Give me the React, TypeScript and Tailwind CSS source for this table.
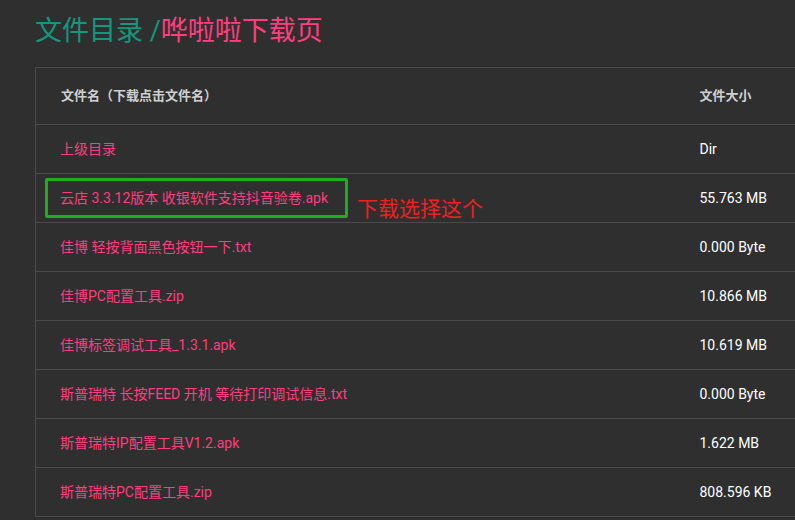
import React from 'react';

// 文件列表
const files = [
  { name: '上级目录', size: 'Dir' },
  { name: '云店 3.3.12版本 收银软件支持抖音验卷.apk', size: '55.763 MB' },
  { name: '佳博 轻按背面黑色按钮一下.txt', size: '0.000 Byte' },
  { name: '佳博PC配置工具.zip', size: '10.866 MB' },
  { name: '佳博标签调试工具_1.3.1.apk', size: '10.619 MB' },
  { name: '斯普瑞特 长按FEED 开机 等待打印调试信息.txt', size: '0.000 Byte' },
  { name: '斯普瑞特IP配置工具V1.2.apk', size: '1.622 MB' },
  { name: '斯普瑞特PC配置工具.zip', size: '808.596 KB' },
];

const font = "font-['Roboto','Noto_Sans_CJK_SC',sans-serif]";

export default function App() {
  return (
    <div className={`relative w-[795px] h-[520px] overflow-hidden bg-[#2f2f2f] ${font}`}>
      <h1 className="pl-[35px] pt-[12px] h-[67px] text-[27px] leading-[38px]">
        <span className="text-[#14967f]">文件目录 /</span>
        <span className="text-[#ff3d7f]">哗啦啦下载页</span>
      </h1>

      <div className="ml-[35px] w-[800px]">
        <table className="w-full border-collapse border border-[#4a4a4a] text-[14px]">
          <thead>
            <tr className="h-[57px] border-b border-[#4a4a4a] text-[13px]">
              <th className="w-[639px] pl-[25px] text-left font-bold text-[#d0d0d0]">文件名（下载点击文件名）</th>
              <th className="pl-[25px] text-left font-bold text-[#d0d0d0]">文件大小</th>
            </tr>
          </thead>
          <tbody>
            {files.map(f => (
              <tr key={f.name} className="h-[49px] border-b border-[#4a4a4a]">
                <td className="pl-[24px] text-[#ff3d7f]">{f.name}</td>
                <td className="pl-[25px] text-white">{f.size}</td>
              </tr>
            ))}
          </tbody>
        </table>
      </div>

      {/* 标注 */}
      <div className="absolute left-[45px] top-[178px] w-[303px] h-[40px] border-[3px] border-[#1fae1f] rounded-[2px]" />
      <div className="absolute left-[357px] top-[194px] text-[21px] leading-[30px] text-[#f02020]">下载选择这个</div>
    </div>
  );
}
